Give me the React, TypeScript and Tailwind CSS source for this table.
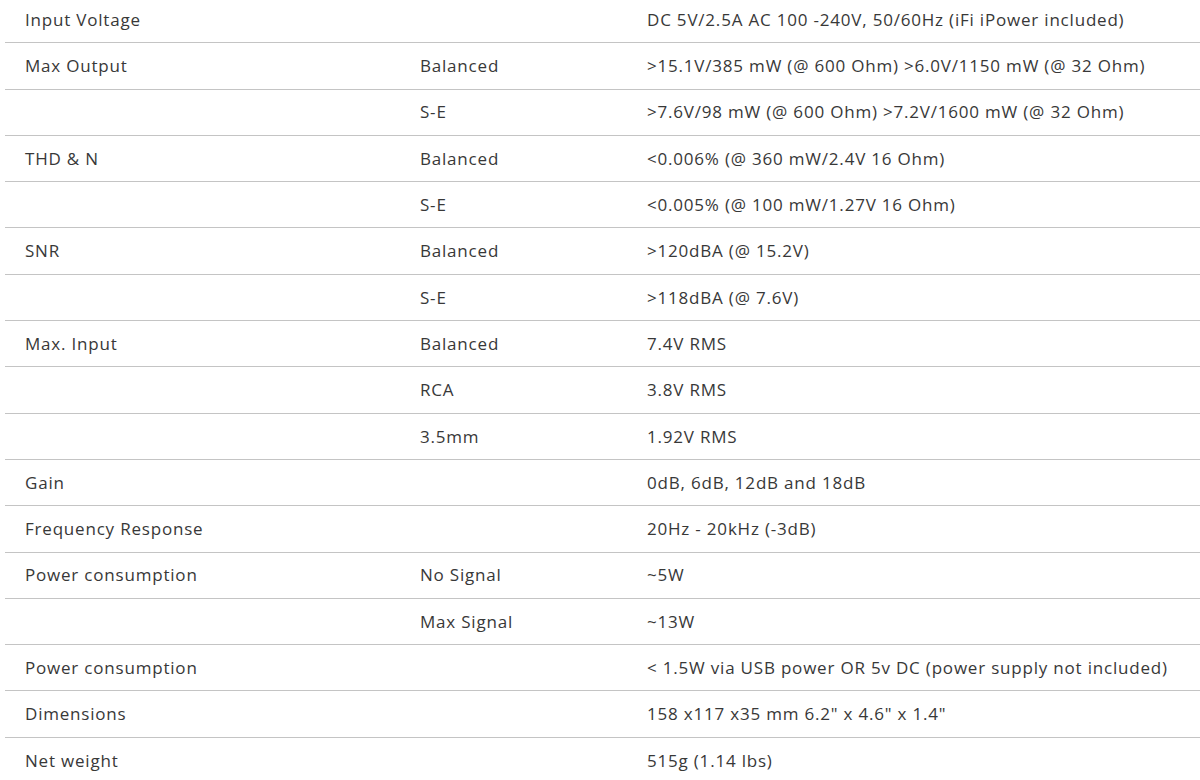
const rows: [string, string, string][] = [
  ['Input Voltage', '', 'DC 5V/2.5A AC 100 -240V, 50/60Hz (iFi iPower included)'],
  ['Max Output', 'Balanced', '>15.1V/385 mW (@ 600 Ohm) >6.0V/1150 mW (@ 32 Ohm)'],
  ['', 'S-E', '>7.6V/98 mW (@ 600 Ohm) >7.2V/1600 mW (@ 32 Ohm)'],
  ['THD & N', 'Balanced', '<0.006% (@ 360 mW/2.4V 16 Ohm)'],
  ['', 'S-E', '<0.005% (@ 100 mW/1.27V 16 Ohm)'],
  ['SNR', 'Balanced', '>120dBA (@ 15.2V)'],
  ['', 'S-E', '>118dBA (@ 7.6V)'],
  ['Max. Input', 'Balanced', '7.4V RMS'],
  ['', 'RCA', '3.8V RMS'],
  ['', '3.5mm', '1.92V RMS'],
  ['Gain', '', '0dB, 6dB, 12dB and 18dB'],
  ['Frequency Response', '', '20Hz - 20kHz (-3dB)'],
  ['Power consumption', 'No Signal', '~5W'],
  ['', 'Max Signal', '~13W'],
  ['Power consumption', '', '< 1.5W via USB power OR 5v DC (power supply not included)'],
  ['Dimensions', '', '158 x117 x35 mm 6.2" x 4.6" x 1.4"'],
  ['Net weight', '', '515g (1.14 lbs)'],
]

export default function App() {
  return (
    <div className="w-[1200px] h-[780px] overflow-hidden bg-white pl-[5px] font-['Open_Sans',sans-serif] text-[17px] tracking-[0.8px] text-[#383838]">
      <div className="-mt-[3px]">
        {rows.map((r, i) => (
          <div
            key={i}
            className="flex items-center h-[46.3px] border-b-[1.5px] border-[#c4c4c4]"
          >
            <div className="w-[395px] pl-5">{r[0]}</div>
            <div className="w-[227px] pl-5">{r[1]}</div>
            <div className="flex-1 pl-5 whitespace-nowrap">{r[2]}</div>
          </div>
        ))}
      </div>
    </div>
  )
}
